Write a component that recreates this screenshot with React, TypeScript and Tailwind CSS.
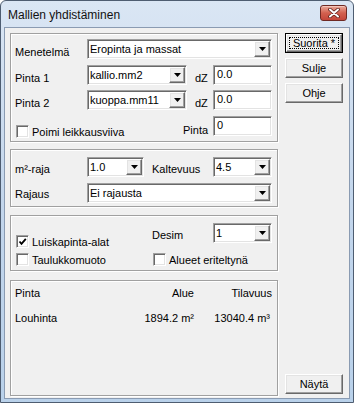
import type { ReactNode } from 'react';

const sunken =
  'border border-t-[#a0a0a0] border-l-[#a0a0a0] border-b-white border-r-white shadow-[inset_1px_1px_0_#696969,inset_-1px_-1px_0_#e3e3e3] bg-white';

const raised =
  'border border-t-white border-l-white border-b-[#696969] border-r-[#696969] shadow-[inset_-1px_-1px_0_#a0a0a0,inset_1px_1px_0_#e3e3e3] bg-[#f0f0f0]';

function Field({ w, value }: { w: string; value: string }) {
  return (
    <div className={`${w} h-[20px] ${sunken} pl-[3px] pt-[1px] leading-[14px] text-black`}>{value}</div>
  );
}

function Combo({ w, value }: { w: string; value: string }) {
  return (
    <div className={`${w} h-[20px] ${sunken} flex p-[1px]`}>
      <div className="flex-1 pl-[1px] pt-[1px] leading-[14px] text-black truncate">{value}</div>
      <div className={`w-[16px] h-full ${raised} flex items-center justify-center`}>
        <svg width="7" height="4" viewBox="0 0 7 4">
          <polygon points="0,0 7,0 3.5,4" fill="#000" />
        </svg>
      </div>
    </div>
  );
}

function Check({ checked = false }: { checked?: boolean }) {
  return (
    <div className={`w-[13px] h-[13px] ${sunken} flex items-center justify-center`}>
      {checked && (
        <svg width="9" height="9" viewBox="0 0 9 9">
          <polyline points="1.5,4.5 3.5,6.8 7.8,1.8" fill="none" stroke="#000" strokeWidth="1.8" />
        </svg>
      )}
    </div>
  );
}

function CheckRow({ label, checked }: { label: string; checked?: boolean }) {
  return (
    <div className="flex items-center h-[13px] ml-[1px]">
      <Check checked={checked} />
      <span className="ml-[3px] leading-[14px]">{label}</span>
    </div>
  );
}

function Btn({ label, isDefault = false }: { label: string; isDefault?: boolean }) {
  if (isDefault) {
    return (
      <div className="w-[58px] h-[20px] border border-black">
        <div className={`w-full h-full ${raised} p-[2px]`}>
          <div className="w-full h-full border border-dotted border-black flex items-center justify-center leading-[14px]">
            {label}
          </div>
        </div>
      </div>
    );
  }
  return (
    <div className={`w-[58px] h-[20px] ${raised} flex items-center justify-center leading-[14px]`}>{label}</div>
  );
}

function Group({ h, className = '', children }: { h: string; className?: string; children: ReactNode }) {
  return (
    <div
      className={`w-[268px] ${h} border border-[#a0a0a0] shadow-[inset_1px_1px_0_#fff,1px_1px_0_#fff] ${className}`}
    >
      {children}
    </div>
  );
}

function Label({ w, pt, children }: { w: string; pt: string; children: ReactNode }) {
  return <div className={`${w} ${pt} leading-[14px] shrink-0`}>{children}</div>;
}

export default function App() {
  return (
    <div className="w-[354px] h-[403px] font-['Liberation_Sans',Arial,sans-serif] text-[11px] text-black">
      {/* Window frame */}
      <div className="w-full h-full flex flex-col border border-[#4e5d71] rounded-t-[6px] bg-gradient-to-b from-[#dae6f4] via-[#c3d6ec] to-[#b9d1ea]">
        {/* Title bar */}
        <div className="h-[26px] flex items-start shrink-0">
          <div className="pl-[7px] pt-[6px] text-[12px] leading-[16px] text-[#111]">Mallien yhdistäminen</div>
          <div className="ml-auto mr-[6px] mt-[4px] w-[27px] h-[16px] rounded-[3px] border border-[#6f2a24] bg-gradient-to-b from-[#e9a99b] via-[#d2604f] to-[#c4463a] shadow-[inset_0_1px_0_#f4c5ba] flex items-center justify-center">
            <svg width="12" height="10" viewBox="0 0 12 10">
              <path d="M2 1.5 L10 8.5 M10 1.5 L2 8.5" stroke="#5a1d18" strokeWidth="3.6" strokeLinecap="round" />
              <path d="M2 1.5 L10 8.5 M10 1.5 L2 8.5" stroke="#fff" strokeWidth="2" strokeLinecap="round" />
            </svg>
          </div>
        </div>

        {/* Client area */}
        <div className="flex-1 px-[3px] pb-[3px] flex">
          <div className="flex-1 border border-[#8a9bb2] bg-[#f0f0f0] flex pl-[5px] pt-[5px] pb-[2px]">
            {/* Left column: group boxes */}
            <div className="w-[268px] flex flex-col">
              <Group h="h-[109px]" className="pl-[4px] pt-[5px]">
                <div className="flex h-[20px]">
                  <Label w="w-[72px]" pt="pt-[6px]">Menetelmä</Label>
                  <Combo w="w-[185px]" value="Eropinta ja massat" />
                </div>
                <div className="flex h-[20px] mt-[6px]">
                  <Label w="w-[72px]" pt="pt-[6px]">Pinta 1</Label>
                  <Combo w="w-[100px]" value="kallio.mm2" />
                  <Label w="w-[26px] pl-[8px]" pt="pt-[6px]">dZ</Label>
                  <Field w="w-[59px]" value="0.0" />
                </div>
                <div className="flex h-[20px] mt-[5px]">
                  <Label w="w-[72px]" pt="pt-[6px]">Pinta 2</Label>
                  <Combo w="w-[100px]" value="kuoppa.mm11" />
                  <Label w="w-[26px] pl-[8px]" pt="pt-[6px]">dZ</Label>
                  <Field w="w-[59px]" value="0.0" />
                </div>
                <div className="flex h-[20px] mt-[6px]">
                  <div className="w-[168px] pt-[9px]">
                    <CheckRow label="Poimi leikkausviiva" />
                  </div>
                  <Label w="w-[30px]" pt="pt-[7px]">Pinta</Label>
                  <Field w="w-[59px]" value="0" />
                </div>
              </Group>

              <Group h="h-[58px]" className="mt-[7px] pl-[4px] pt-[7px]">
                <div className="flex h-[20px]">
                  <Label w="w-[72px]" pt="pt-[5px]">m²-raja</Label>
                  <Combo w="w-[57px]" value="1.0" />
                  <Label w="w-[69px] pl-[8px]" pt="pt-[5px]">Kaltevuus</Label>
                  <Combo w="w-[59px]" value="4.5" />
                </div>
                <div className="flex h-[20px] mt-[6px]">
                  <Label w="w-[72px]" pt="pt-[4px]">Rajaus</Label>
                  <Combo w="w-[185px]" value="Ei rajausta" />
                </div>
              </Group>

              <Group h="h-[56px]" className="mt-[8px] pl-[4px] flex">
                <div className="w-[137px] pt-[19px] flex flex-col gap-[5px]">
                  <CheckRow label="Luiskapinta-alat" checked />
                  <CheckRow label="Taulukkomuoto" />
                </div>
                <div className="pt-[7px] flex flex-col">
                  <div className="flex h-[20px]">
                    <Label w="w-[61px]" pt="pt-[5px]">Desim</Label>
                    <Combo w="w-[59px]" value="1" />
                  </div>
                  <div className="mt-[10px]">
                    <CheckRow label="Alueet eriteltynä" />
                  </div>
                </div>
              </Group>

              <Group h="h-[116px]" className="mt-[9px] pl-[4px] pt-[5px]">
                <div className="grid grid-cols-[100px_79px_78px] leading-[14px]">
                  <div>Pinta</div>
                  <div className="text-right">Alue</div>
                  <div className="text-right">Tilavuus</div>
                </div>
                <div className="grid grid-cols-[100px_79px_78px] leading-[14px] mt-[11px]">
                  <div>Louhinta</div>
                  <div className="text-right">1894.2 m²</div>
                  <div className="text-right pr-[2px]">13040.4 m³</div>
                </div>
              </Group>
            </div>

            {/* Right column: buttons */}
            <div className="ml-[7px] w-[58px] flex flex-col">
              <Btn label="Suorita *" isDefault />
              <div className="mt-[5px]">
                <Btn label="Sulje" />
              </div>
              <div className="mt-[5px]">
                <Btn label="Ohje" />
              </div>
              <div className="mt-auto mb-[2px]">
                <Btn label="Näytä" />
              </div>
            </div>
          </div>
        </div>
      </div>
    </div>
  );
}
